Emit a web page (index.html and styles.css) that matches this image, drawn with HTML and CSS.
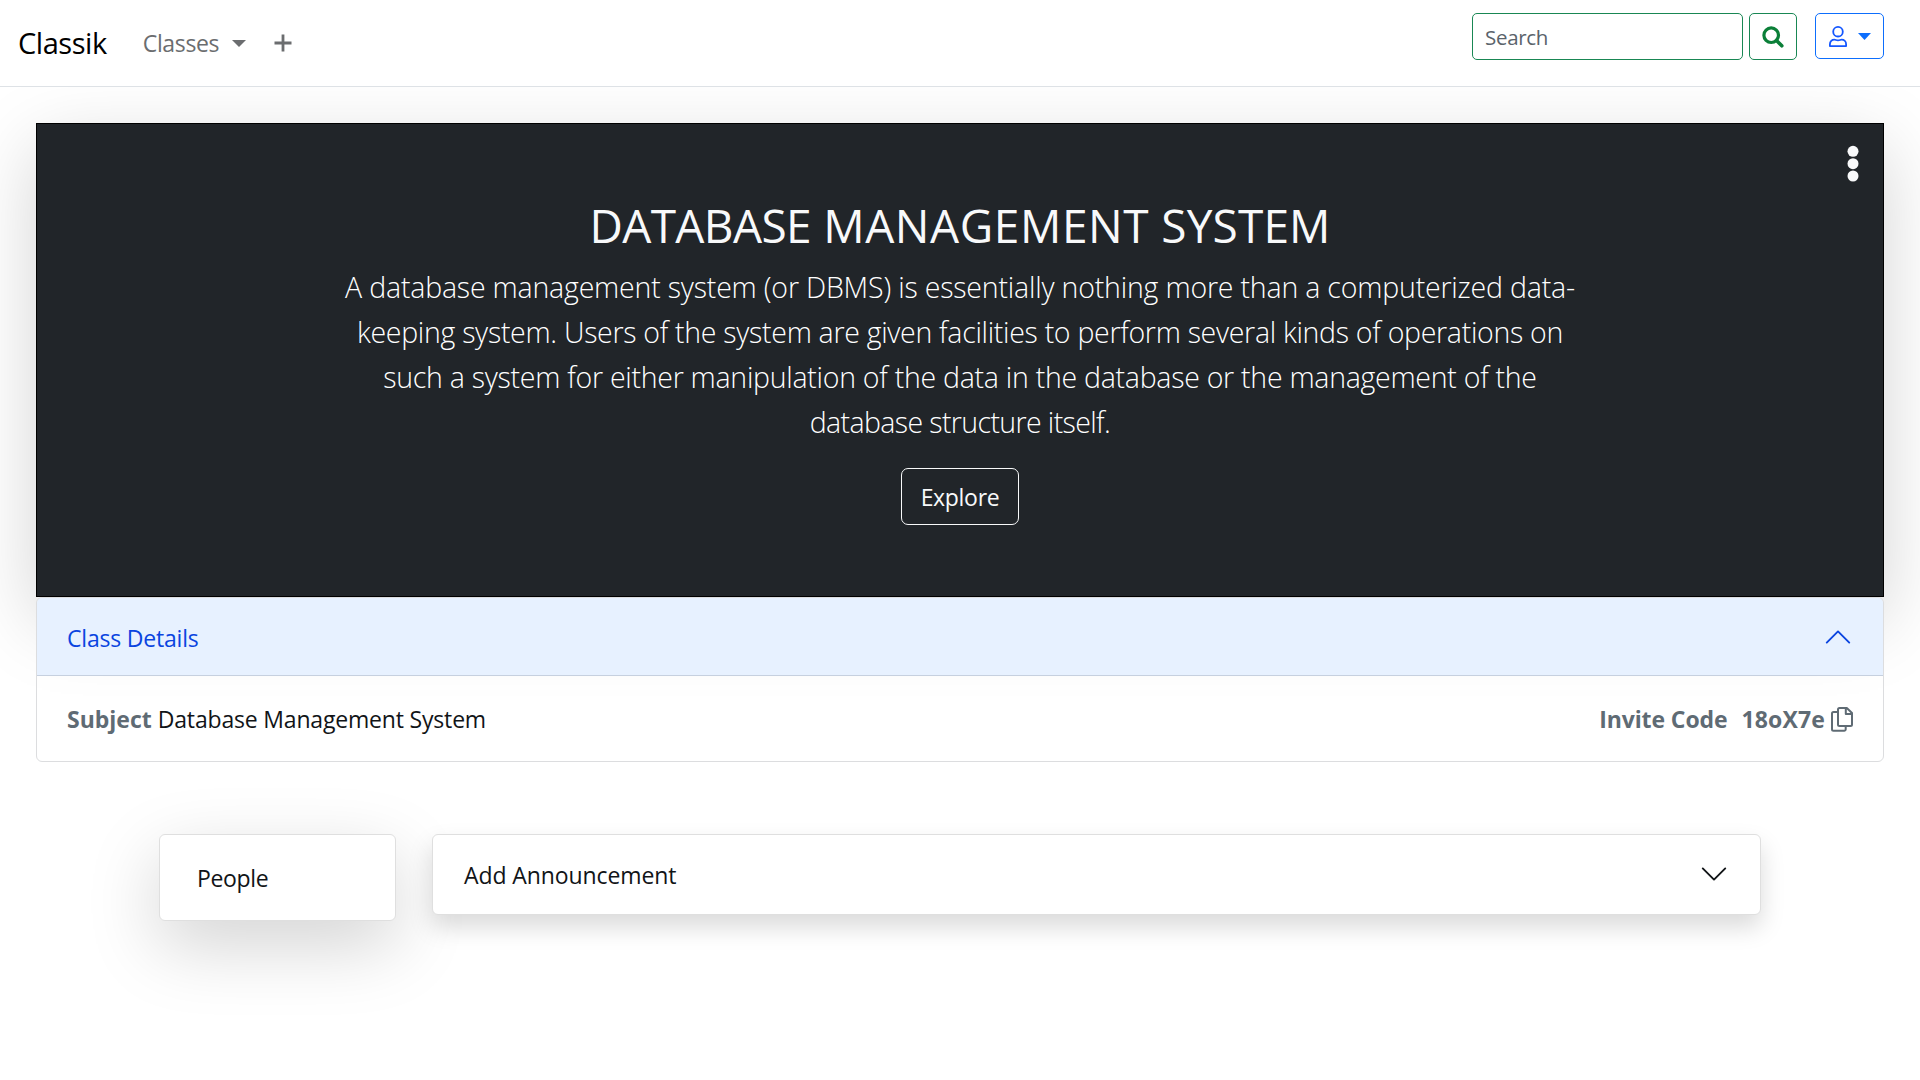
FILE: index.html
```html
<!DOCTYPE html>
<html lang="en">
<head>
<meta charset="utf-8">
<title>Classik</title>
<link rel="stylesheet" href="styles.css">
</head>
<body>
<nav class="navbar">
  <a class="brand">Classik</a>
  <a class="nav-link">Classes</a>
  <svg class="caret" width="14" height="7" viewBox="0 0 14 7"><path d="M0 0h14L7 7z" fill="currentColor"/></svg>
  <svg class="plus" width="18" height="18" viewBox="0 0 18 18"><path d="M9 .5v17M.5 9h17" stroke="currentColor" stroke-width="2.800"/></svg>
  <div class="tools">
    <div class="search-input">Search</div>
    <button class="btn btn-search"><svg width="22" height="22" viewBox="0 0 22 22" fill="none" stroke="currentColor"><circle cx="9.200" cy="9.200" r="7.300" stroke-width="3.200"/><path d="M14.500 14.500l5.300 5.300" stroke-width="3.600" stroke-linecap="round"/></svg></button>
    <button class="btn btn-user">
      <svg width="18" height="21" viewBox="0 0 18 21" fill="none" stroke="currentColor" stroke-width="1.8"><circle cx="9" cy="5.700" r="4.800"/><path d="M.9 20.100v-1.900c0-2.700 2-4.500 4.500-4.500 1.300 0 1.800.7 3.600.7s2.300-.7 3.600-.7c2.500 0 4.500 1.800 4.500 4.500v1.900z" stroke-linejoin="round"/></svg>
      <svg class="user-caret" width="13" height="7" viewBox="0 0 13 7"><path d="M0 0h13L6.500 7z" fill="currentColor"/></svg>
    </button>
  </div>
</nav>
<main>
  <section class="hero">
    <svg class="kebab" width="12" height="38" viewBox="0 0 12 38" fill="currentColor"><circle cx="6" cy="6.300" r="5.500"/><circle cx="6" cy="18.700" r="5.500"/><circle cx="6" cy="31" r="5.500"/></svg>
    <h1><span class="word-1">DATABASE</span> <span class="word-2">MANAGEMENT</span> SYSTEM</h1>
    <p class="lead">
      <span class="line-1">A database management system (or DBMS) is essentially nothing more than a computerized data-</span><br>
      <span class="line-2">keeping system. Users of the system are given facilities to perform several kinds of operations on</span><br>
      <span class="line-3">such a system for either manipulation of the data in the database or the management of the</span><br>
      <span class="line-4">database structure itself.</span>
    </p>
    <button class="btn btn-explore">Explore</button>
  </section>
  <section class="details">
    <header class="details-head">
      <span class="details-title">Class Details</span>
      <svg width="30" height="30" viewBox="0 0 16 16"><path d="M2 11l6-6 6 6" fill="none" stroke="currentColor" stroke-linecap="round" stroke-linejoin="round"/></svg>
    </header>
    <div class="details-body">
      <div class="subject"><b>Subject</b><span>Database Management System</span></div>
      <div class="invite"><b class="invite-label">Invite Code</b><b class="invite-code">18oX7e</b>
        <svg width="22" height="25" viewBox="0 0 22 25" fill="none" stroke="currentColor" stroke-width="2" stroke-linejoin="round"><path d="M8.500 1h7.300L21 6v11.500a1.500 1.500 0 0 1-1.500 1.500h-11A1.500 1.500 0 0 1 7 17.500v-15A1.500 1.500 0 0 1 8.500 1zM14.800 1v6H21M7 5H2.500A1.500 1.500 0 0 0 1 6.500v15.700a1.500 1.500 0 0 0 1.500 1.500h10.700a1.500 1.500 0 0 0 1.500-1.500V19"/></svg>
      </div>
    </div>
  </section>
  <div class="columns">
    <aside class="people">People</aside>
    <section class="announce">
      <span>Add Announcement</span>
      <svg width="30" height="30" viewBox="0 0 16 16"><path d="M2 5l6 6 6-6" fill="none" stroke="currentColor" stroke-linecap="round" stroke-linejoin="round"/></svg>
    </section>
  </div>
</main>
</body>
</html>
```
FILE: styles.css
```css
* { box-sizing: border-box; }
body {
  margin: 0;
  min-height: 100vh;
  background: #fff;
  color: #111417;
  font: 23px/36px "Open Sans", "Noto Sans", sans-serif;
}
svg { display: block; flex: none; }

.navbar {
  position: relative;
  z-index: 1;
  display: flex;
  align-items: center;
  height: 87px;
  padding: 0 36px 0 18px;
  border-bottom: 1px solid #dee2e6;
  background: #fff;
}
.brand { font-size: 29px; letter-spacing: -.45px; color: #000; }
.nav-link { margin-left: 36px; letter-spacing: -.35px; color: #6b6d6f; }
.caret { margin-left: 13px; color: #6b6d6f; }
.plus { margin-left: 28px; color: #6b6d6f; }
.tools {
  display: flex;
  align-self: flex-start;
  margin-left: auto;
  padding-top: 13px;
}
.search-input {
  display: flex;
  align-items: center;
  width: 271px;
  height: 47px;
  padding-left: 12px;
  border: 1px solid #198754;
  border-radius: 5px;
  color: #5a636b;
  font-size: 20.5px;
  letter-spacing: -.3px;
}
.btn {
  display: flex;
  align-items: center;
  justify-content: center;
  padding: 0;
  border: 1px solid;
  border-radius: 5px;
  background: transparent;
  font: inherit;
}
.btn-search { width: 48px; height: 47px; margin-left: 6px; border-color: #198754; color: #0b7f38; }
.btn-user { width: 69px; height: 46px; margin-left: 18px; border-color: #0d6efd; color: #1457ff; }
.user-caret { margin-left: 11px; color: #0d6efd; }

main { min-height: calc(100vh - 87px); padding: 36px 36px 0; }
.hero {
  position: relative;
  display: flex;
  flex-direction: column;
  align-items: center;
  height: 474px;
  padding-top: 72px;
  border: 1px solid #000;
  background: #212529;
  color: #f8f9fa;
  box-shadow: 0 24px 72px rgba(0, 0, 0, .175);
}
.kebab { position: absolute; top: 21px; right: 24px; }
h1 {
  margin: 0 0 11px;
  font-size: 46px;
  font-weight: 400;
  line-height: 58px;
  letter-spacing: .14px;
  white-space: nowrap;
}
.word-1 { letter-spacing: -.6px; }
.word-2 { letter-spacing: .6px; }
.lead {
  margin: 0 0 23px;
  font-size: 28.5px;
  font-weight: 300;
  line-height: 45px;
  text-align: center;
  white-space: nowrap;
  color: #fff;
}
.line-1 { letter-spacing: -.19px; }
.line-2 { letter-spacing: -.3px; }
.line-3 { letter-spacing: -.27px; }
.line-4 { letter-spacing: -.62px; }
.btn-explore {
  width: 118px;
  height: 57px;
  border-color: #f8f9fa;
  border-radius: 7px;
  color: #f8f9fa;
  letter-spacing: -.3px;
}

.details {
  position: relative;
  height: 165px;
  border: 1px solid #dcdddf;
  border-radius: 6px;
}
.details-head {
  display: flex;
  align-items: center;
  justify-content: space-between;
  height: 78px;
  padding: 0 30px;
  border-bottom: 1px solid #c6d0df;
  border-radius: 5px 5px 0 0;
  background: #e7f1ff;
  color: #0a44e0;
}
.details-title { padding-top: 2px; letter-spacing: -.2px; }
.details-body {
  display: flex;
  align-items: center;
  justify-content: space-between;
  height: 86px;
  padding: 0 30px;
}
.subject, .invite { display: flex; align-items: center; }
.subject b, .invite { color: #5f6b74; }
.subject span { margin-left: 6px; letter-spacing: -.18px; }
.invite-label { letter-spacing: -.1px; }
.invite-code { margin-left: 14px; letter-spacing: .15px; }
.invite svg { margin-left: 6px; }

.columns { display: flex; align-items: flex-start; gap: 36px; padding: 72px 123px 0; }
.people, .announce {
  border: 1px solid #dfdfdf;
  border-radius: 6px;
  background: #fff;
}
.people {
  width: 237px;
  height: 87px;
  padding: 25px 37px;
  letter-spacing: -.35px;
  box-shadow: 0 24px 72px rgba(0, 0, 0, .175);
}
.announce {
  display: flex;
  flex: 1;
  align-items: center;
  justify-content: space-between;
  height: 81px;
  padding: 0 31px;
  letter-spacing: -.1px;
  box-shadow: 0 12px 24px rgba(0, 0, 0, .15);
}
.announce svg { margin-bottom: 2px; }
```
